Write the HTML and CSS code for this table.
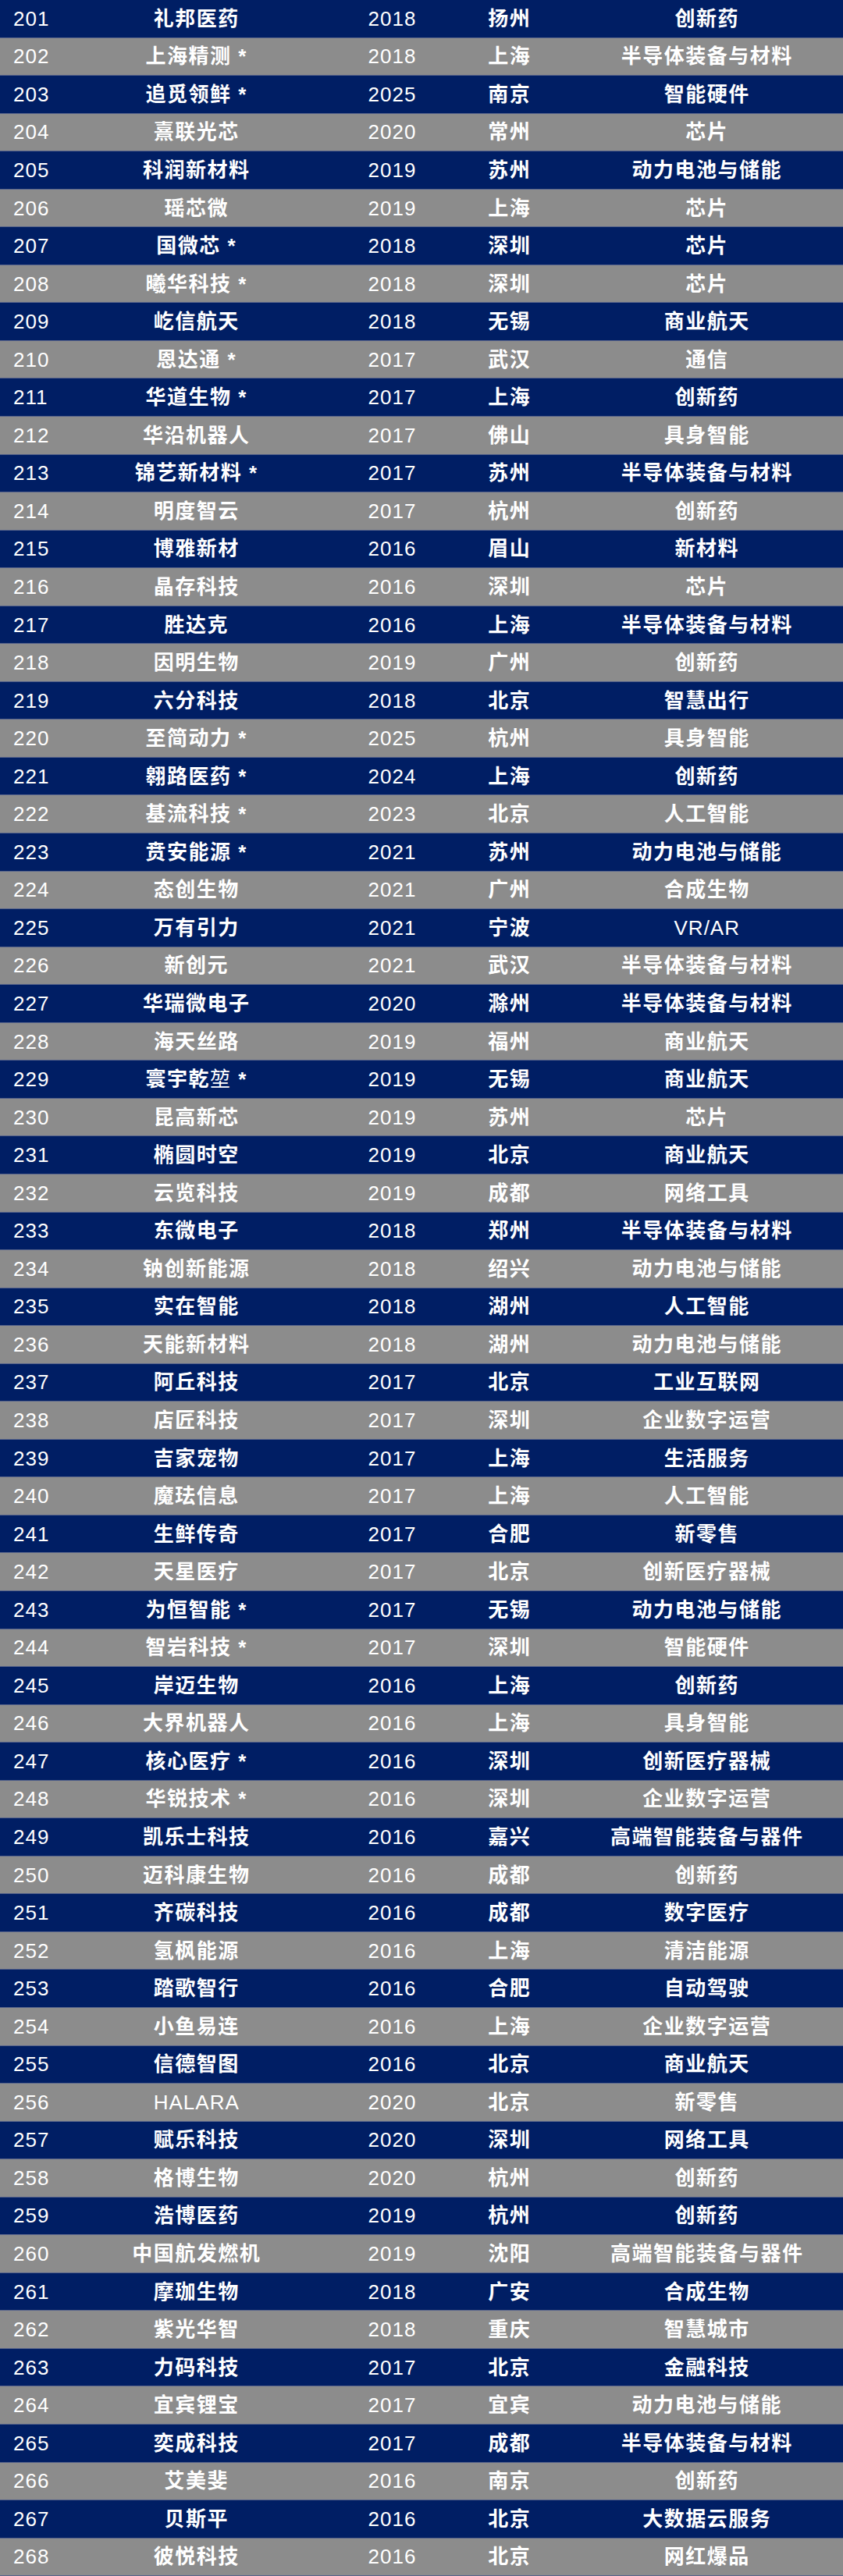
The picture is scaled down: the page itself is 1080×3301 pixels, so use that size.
FILE: index.html
```html
<!DOCTYPE html>
<html lang="zh-CN">
<head>
<meta charset="utf-8">
<title>榜单 201-268</title>
<link rel="stylesheet" href="styles.css">
</head>
<body>
<div class="table">
<div class="row navy"><span class="rank">201</span><span class="name">礼邦医药</span><span class="year">2018</span><span class="city">扬州</span><span class="sector">创新药</span></div>
<div class="row gray"><span class="rank">202</span><span class="name">上海精测 *</span><span class="year">2018</span><span class="city">上海</span><span class="sector">半导体装备与材料</span></div>
<div class="row navy"><span class="rank">203</span><span class="name">追觅领鲜 *</span><span class="year">2025</span><span class="city">南京</span><span class="sector">智能硬件</span></div>
<div class="row gray"><span class="rank">204</span><span class="name">熹联光芯</span><span class="year">2020</span><span class="city">常州</span><span class="sector">芯片</span></div>
<div class="row navy"><span class="rank">205</span><span class="name">科润新材料</span><span class="year">2019</span><span class="city">苏州</span><span class="sector">动力电池与储能</span></div>
<div class="row gray"><span class="rank">206</span><span class="name">瑶芯微</span><span class="year">2019</span><span class="city">上海</span><span class="sector">芯片</span></div>
<div class="row navy"><span class="rank">207</span><span class="name">国微芯 *</span><span class="year">2018</span><span class="city">深圳</span><span class="sector">芯片</span></div>
<div class="row gray"><span class="rank">208</span><span class="name">曦华科技 *</span><span class="year">2018</span><span class="city">深圳</span><span class="sector">芯片</span></div>
<div class="row navy"><span class="rank">209</span><span class="name">屹信航天</span><span class="year">2018</span><span class="city">无锡</span><span class="sector">商业航天</span></div>
<div class="row gray"><span class="rank">210</span><span class="name">恩达通 *</span><span class="year">2017</span><span class="city">武汉</span><span class="sector">通信</span></div>
<div class="row navy"><span class="rank">211</span><span class="name">华道生物 *</span><span class="year">2017</span><span class="city">上海</span><span class="sector">创新药</span></div>
<div class="row gray"><span class="rank">212</span><span class="name">华沿机器人</span><span class="year">2017</span><span class="city">佛山</span><span class="sector">具身智能</span></div>
<div class="row navy"><span class="rank">213</span><span class="name">锦艺新材料 *</span><span class="year">2017</span><span class="city">苏州</span><span class="sector">半导体装备与材料</span></div>
<div class="row gray"><span class="rank">214</span><span class="name">明度智云</span><span class="year">2017</span><span class="city">杭州</span><span class="sector">创新药</span></div>
<div class="row navy"><span class="rank">215</span><span class="name">博雅新材</span><span class="year">2016</span><span class="city">眉山</span><span class="sector">新材料</span></div>
<div class="row gray"><span class="rank">216</span><span class="name">晶存科技</span><span class="year">2016</span><span class="city">深圳</span><span class="sector">芯片</span></div>
<div class="row navy"><span class="rank">217</span><span class="name">胜达克</span><span class="year">2016</span><span class="city">上海</span><span class="sector">半导体装备与材料</span></div>
<div class="row gray"><span class="rank">218</span><span class="name">因明生物</span><span class="year">2019</span><span class="city">广州</span><span class="sector">创新药</span></div>
<div class="row navy"><span class="rank">219</span><span class="name">六分科技</span><span class="year">2018</span><span class="city">北京</span><span class="sector">智慧出行</span></div>
<div class="row gray"><span class="rank">220</span><span class="name">至简动力 *</span><span class="year">2025</span><span class="city">杭州</span><span class="sector">具身智能</span></div>
<div class="row navy"><span class="rank">221</span><span class="name">翱路医药 *</span><span class="year">2024</span><span class="city">上海</span><span class="sector">创新药</span></div>
<div class="row gray"><span class="rank">222</span><span class="name">基流科技 *</span><span class="year">2023</span><span class="city">北京</span><span class="sector">人工智能</span></div>
<div class="row navy"><span class="rank">223</span><span class="name">贲安能源 *</span><span class="year">2021</span><span class="city">苏州</span><span class="sector">动力电池与储能</span></div>
<div class="row gray"><span class="rank">224</span><span class="name">态创生物</span><span class="year">2021</span><span class="city">广州</span><span class="sector">合成生物</span></div>
<div class="row navy"><span class="rank">225</span><span class="name">万有引力</span><span class="year">2021</span><span class="city">宁波</span><span class="sector latin">VR/AR</span></div>
<div class="row gray"><span class="rank">226</span><span class="name">新创元</span><span class="year">2021</span><span class="city">武汉</span><span class="sector">半导体装备与材料</span></div>
<div class="row navy"><span class="rank">227</span><span class="name">华瑞微电子</span><span class="year">2020</span><span class="city">滁州</span><span class="sector">半导体装备与材料</span></div>
<div class="row gray"><span class="rank">228</span><span class="name">海天丝路</span><span class="year">2019</span><span class="city">福州</span><span class="sector">商业航天</span></div>
<div class="row navy"><span class="rank">229</span><span class="name">寰宇乾<span class="thin">堃</span> *</span><span class="year">2019</span><span class="city">无锡</span><span class="sector">商业航天</span></div>
<div class="row gray"><span class="rank">230</span><span class="name">昆高新芯</span><span class="year">2019</span><span class="city">苏州</span><span class="sector">芯片</span></div>
<div class="row navy"><span class="rank">231</span><span class="name">椭圆时空</span><span class="year">2019</span><span class="city">北京</span><span class="sector">商业航天</span></div>
<div class="row gray"><span class="rank">232</span><span class="name">云览科技</span><span class="year">2019</span><span class="city">成都</span><span class="sector">网络工具</span></div>
<div class="row navy"><span class="rank">233</span><span class="name">东微电子</span><span class="year">2018</span><span class="city">郑州</span><span class="sector">半导体装备与材料</span></div>
<div class="row gray"><span class="rank">234</span><span class="name">钠创新能源</span><span class="year">2018</span><span class="city">绍兴</span><span class="sector">动力电池与储能</span></div>
<div class="row navy"><span class="rank">235</span><span class="name">实在智能</span><span class="year">2018</span><span class="city">湖州</span><span class="sector">人工智能</span></div>
<div class="row gray"><span class="rank">236</span><span class="name">天能新材料</span><span class="year">2018</span><span class="city">湖州</span><span class="sector">动力电池与储能</span></div>
<div class="row navy"><span class="rank">237</span><span class="name">阿丘科技</span><span class="year">2017</span><span class="city">北京</span><span class="sector">工业互联网</span></div>
<div class="row gray"><span class="rank">238</span><span class="name">店匠科技</span><span class="year">2017</span><span class="city">深圳</span><span class="sector">企业数字运营</span></div>
<div class="row navy"><span class="rank">239</span><span class="name">吉家宠物</span><span class="year">2017</span><span class="city">上海</span><span class="sector">生活服务</span></div>
<div class="row gray"><span class="rank">240</span><span class="name">魔珐信息</span><span class="year">2017</span><span class="city">上海</span><span class="sector">人工智能</span></div>
<div class="row navy"><span class="rank">241</span><span class="name">生鲜传奇</span><span class="year">2017</span><span class="city">合肥</span><span class="sector">新零售</span></div>
<div class="row gray"><span class="rank">242</span><span class="name">天星医疗</span><span class="year">2017</span><span class="city">北京</span><span class="sector">创新医疗器械</span></div>
<div class="row navy"><span class="rank">243</span><span class="name">为恒智能 *</span><span class="year">2017</span><span class="city">无锡</span><span class="sector">动力电池与储能</span></div>
<div class="row gray"><span class="rank">244</span><span class="name">智岩科技 *</span><span class="year">2017</span><span class="city">深圳</span><span class="sector">智能硬件</span></div>
<div class="row navy"><span class="rank">245</span><span class="name">岸迈生物</span><span class="year">2016</span><span class="city">上海</span><span class="sector">创新药</span></div>
<div class="row gray"><span class="rank">246</span><span class="name">大界机器人</span><span class="year">2016</span><span class="city">上海</span><span class="sector">具身智能</span></div>
<div class="row navy"><span class="rank">247</span><span class="name">核心医疗 *</span><span class="year">2016</span><span class="city">深圳</span><span class="sector">创新医疗器械</span></div>
<div class="row gray"><span class="rank">248</span><span class="name">华锐技术 *</span><span class="year">2016</span><span class="city">深圳</span><span class="sector">企业数字运营</span></div>
<div class="row navy"><span class="rank">249</span><span class="name">凯乐士科技</span><span class="year">2016</span><span class="city">嘉兴</span><span class="sector">高端智能装备与器件</span></div>
<div class="row gray"><span class="rank">250</span><span class="name">迈科康生物</span><span class="year">2016</span><span class="city">成都</span><span class="sector">创新药</span></div>
<div class="row navy"><span class="rank">251</span><span class="name">齐碳科技</span><span class="year">2016</span><span class="city">成都</span><span class="sector">数字医疗</span></div>
<div class="row gray"><span class="rank">252</span><span class="name">氢枫能源</span><span class="year">2016</span><span class="city">上海</span><span class="sector">清洁能源</span></div>
<div class="row navy"><span class="rank">253</span><span class="name">踏歌智行</span><span class="year">2016</span><span class="city">合肥</span><span class="sector">自动驾驶</span></div>
<div class="row gray"><span class="rank">254</span><span class="name">小鱼易连</span><span class="year">2016</span><span class="city">上海</span><span class="sector">企业数字运营</span></div>
<div class="row navy"><span class="rank">255</span><span class="name">信德智图</span><span class="year">2016</span><span class="city">北京</span><span class="sector">商业航天</span></div>
<div class="row gray"><span class="rank">256</span><span class="name latin">HALARA</span><span class="year">2020</span><span class="city">北京</span><span class="sector">新零售</span></div>
<div class="row navy"><span class="rank">257</span><span class="name">赋乐科技</span><span class="year">2020</span><span class="city">深圳</span><span class="sector">网络工具</span></div>
<div class="row gray"><span class="rank">258</span><span class="name">格博生物</span><span class="year">2020</span><span class="city">杭州</span><span class="sector">创新药</span></div>
<div class="row navy"><span class="rank">259</span><span class="name">浩博医药</span><span class="year">2019</span><span class="city">杭州</span><span class="sector">创新药</span></div>
<div class="row gray"><span class="rank">260</span><span class="name">中国航发燃机</span><span class="year">2019</span><span class="city">沈阳</span><span class="sector">高端智能装备与器件</span></div>
<div class="row navy"><span class="rank">261</span><span class="name">摩珈生物</span><span class="year">2018</span><span class="city">广安</span><span class="sector">合成生物</span></div>
<div class="row gray"><span class="rank">262</span><span class="name">紫光华智</span><span class="year">2018</span><span class="city">重庆</span><span class="sector">智慧城市</span></div>
<div class="row navy"><span class="rank">263</span><span class="name">力码科技</span><span class="year">2017</span><span class="city">北京</span><span class="sector">金融科技</span></div>
<div class="row gray"><span class="rank">264</span><span class="name">宜宾锂宝</span><span class="year">2017</span><span class="city">宜宾</span><span class="sector">动力电池与储能</span></div>
<div class="row navy"><span class="rank">265</span><span class="name">奕成科技</span><span class="year">2017</span><span class="city">成都</span><span class="sector">半导体装备与材料</span></div>
<div class="row gray"><span class="rank">266</span><span class="name">艾美斐</span><span class="year">2016</span><span class="city">南京</span><span class="sector">创新药</span></div>
<div class="row navy"><span class="rank">267</span><span class="name">贝斯平</span><span class="year">2016</span><span class="city">北京</span><span class="sector">大数据云服务</span></div>
<div class="row gray"><span class="rank">268</span><span class="name">彼悦科技</span><span class="year">2016</span><span class="city">北京</span><span class="sector">网红爆品</span></div>
</div>
</body>
</html>
```

FILE: styles.css
```css
html, body {
  margin: 0;
  padding: 0;
  background: #8c8c8c;
}

.table {
  width: 1080px;
  height: 3301px;
  display: flex;
  flex-direction: column;
  font-family: "Liberation Sans", Arial, "Noto Sans CJK SC", sans-serif;
  color: #ffffff;
}

.row {
  flex: 1 1 0;
  min-height: 0;
  box-sizing: border-box;
  display: grid;
  grid-template-columns: 72px 358px 144px 156px 350px;
  align-items: center;
  border-bottom: 1px solid #56638a;
  font-size: 26px;
  line-height: 1;
}

.navy {
  background: #001e64;
}

.gray {
  background: #8c8c8c;
}

.rank {
  padding-left: 17px;
  letter-spacing: 1px;
  white-space: nowrap;
}

.year {
  text-align: center;
  letter-spacing: 1px;
  padding-left: 1px;
}

.name,
.city,
.sector {
  text-align: center;
  font-weight: 700;
  letter-spacing: 1.5px;
  padding-left: 1.5px;
  white-space: nowrap;
}

.name.latin,
.sector.latin {
  font-weight: 400;
  letter-spacing: 1px;
}

.thin {
  font-weight: 400;
}
```
